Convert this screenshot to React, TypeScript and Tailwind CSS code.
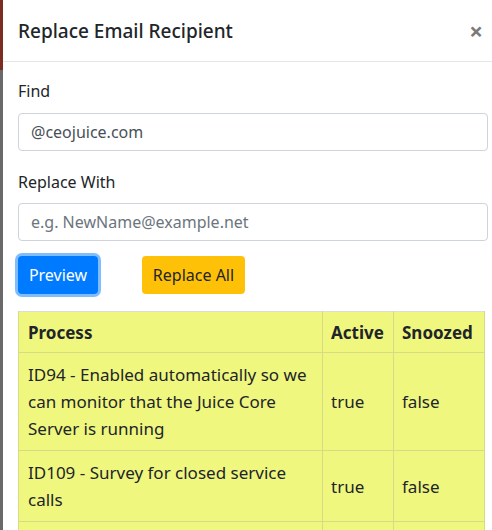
import { type PropsWithChildren } from "react"

const font = { fontFamily: '"Segoe UI", "Noto Sans", "Open Sans", sans-serif' }

interface Row {
  process: string
  active: string
  snoozed: string
}

const rows: Row[] = [
  {
    process:
      "ID94 - Enabled automatically so we can monitor that the Juice Core Server is running",
    active: "true",
    snoozed: "false",
  },
  {
    process: "ID109 - Survey for closed service calls",
    active: "true",
    snoozed: "false",
  },
]

const Label = ({ children }: PropsWithChildren) => (
  <label className="block text-[16px] leading-6 text-[#212529]">{children}</label>
)

export default function App() {
  return (
    <div
      className="flex h-[530px] w-[492px] overflow-hidden bg-white"
      style={font}
    >
      <div className="flex w-[3px] shrink-0 flex-col">
        <div className="h-[70px] bg-[#7b2d24]" />
        <div className="flex-1 bg-[#696969]" />
      </div>
      <div className="flex min-w-0 flex-1 flex-col">
        <header className="flex h-[62px] shrink-0 items-center justify-between border-b border-[#e4e7ea] pl-[15px] pr-[9px] pt-[1px]">
          <h5 className="text-[19px] font-medium leading-[30px] text-[#212529]">
            Replace Email Recipient
          </h5>
          <button className="text-[24px] font-bold leading-none text-[#7a7a7a]">
            ×
          </button>
        </header>
        <div className="flex shrink-0 flex-col pl-[15px] pr-[4px]">
          <div className="mt-[17px]">
            <Label>Find</Label>
          </div>
          <input
            className="mt-[10px] h-[38px] w-full rounded-[4px] border border-[#ced4da] px-3 text-[16px] text-[#495057] outline-none"
            defaultValue="@ceojuice.com"
          />
          <div className="mt-[19px]">
            <Label>Replace With</Label>
          </div>
          <input
            className="mt-[9px] h-[38px] w-full rounded-[4px] border border-[#ced4da] px-3 text-[16px] text-[#495057] outline-none placeholder:text-[#6c757d]"
            placeholder="e.g. NewName@example.net"
          />
          <div className="mt-[15px] flex items-center">
            <button className="h-[38px] w-[80px] rounded-[4px] bg-[#007bff] text-[16px] text-white ring-[3px] ring-[#80bdff]">
              Preview
            </button>
            <button className="ml-[44px] h-[38px] w-[103px] rounded-[4px] bg-[#ffc107] text-[16px] text-[#212529]">
              Replace All
            </button>
          </div>
          <table className="mt-[17px] w-[467px] border-collapse border-t border-[#dcdcdc] bg-[#f0f77f] text-[17px] leading-[27px] text-[#212529]">
            <thead>
              <tr className="h-[41px]">
                <th className="border border-t-0 border-[#d6dc86] px-[9px] text-left font-bold">
                  Process
                </th>
                <th className="w-[71px] border border-t-0 border-[#d6dc86] px-[8px] text-left font-bold">
                  Active
                </th>
                <th className="w-[91px] border border-t-0 border-[#d6dc86] px-[8px] text-left font-bold">
                  Snoozed
                </th>
              </tr>
            </thead>
            <tbody>
              {rows.map((row) => (
                <tr key={row.process}>
                  <td className="border border-[#d6dc86] px-[9px] py-[8px] align-middle">
                    {row.process}
                  </td>
                  <td className="border border-[#d6dc86] px-[8px] py-[8px] align-middle">
                    {row.active}
                  </td>
                  <td className="border border-[#d6dc86] px-[8px] py-[8px] align-middle">
                    {row.snoozed}
                  </td>
                </tr>
              ))}
              <tr className="h-[43px]">
                <td className="border border-[#d6dc86]" />
                <td className="border border-[#d6dc86]" />
                <td className="border border-[#d6dc86]" />
              </tr>
            </tbody>
          </table>
        </div>
      </div>
    </div>
  )
}
